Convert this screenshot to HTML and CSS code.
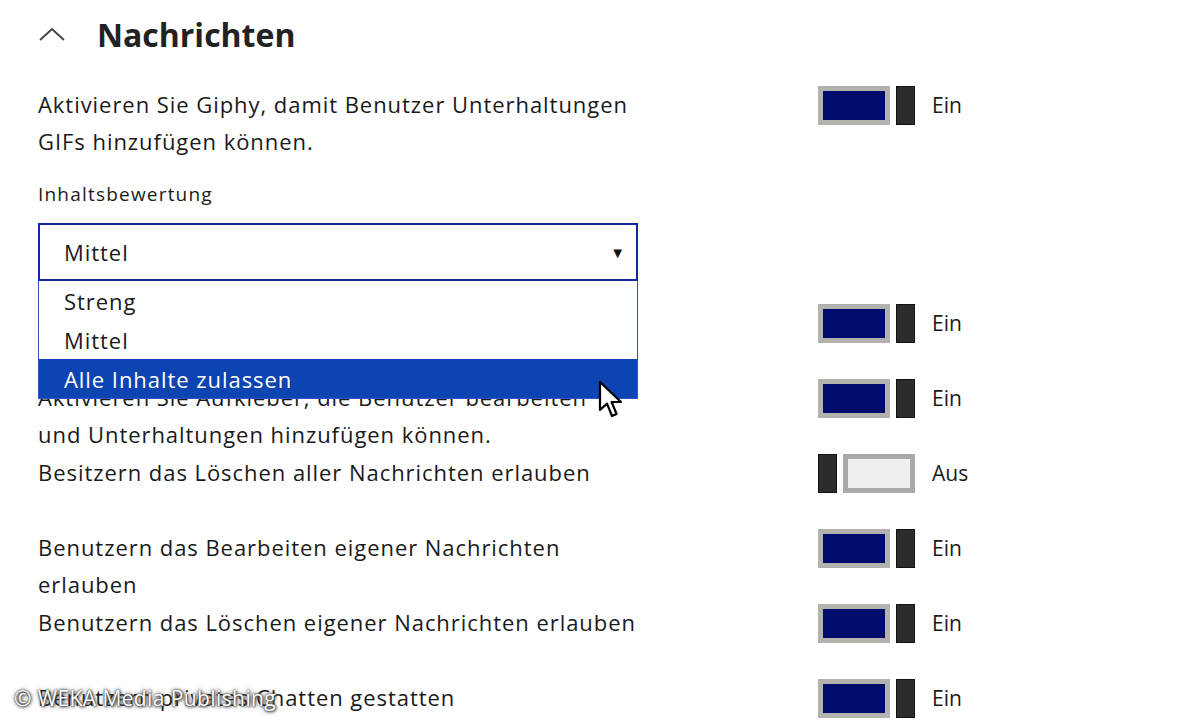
FILE: index.html
```html
<!DOCTYPE html>
<html lang="de">
<head>
  <meta charset="UTF-8">
  <meta name="viewport" content="width=device-width, initial-scale=1.0">
  <title>Nachrichten</title>
  <link rel="stylesheet" href="styles.css">
</head>
<body>

  <div class="page">
    <div class="section-head">
      <svg class="chevron" width="26" height="14" viewBox="0 0 26 14">
        <polyline points="1,13 13,2 25,13" fill="none" stroke="#444" stroke-width="2"/>
      </svg>
      <h2>Nachrichten</h2>
    </div>

    <div class="row">
      <p class="desc">Aktivieren Sie Giphy, damit Benutzer Unterhaltungen GIFs hinzufügen können.</p>
      <div class="toggle on"><span class="track"></span><span class="thumb"></span></div>
      <span class="state">Ein</span>
    </div>

    <div class="rating">
      <label class="rating-label">Inhaltsbewertung</label>
      <div class="select-wrap">
        <div class="select">
          <span>Mittel</span>
          <span class="arrow">&#9660;</span>
        </div>
        <ul class="options">
          <li>Streng</li>
          <li>Mittel</li>
          <li class="active">Alle Inhalte zulassen</li>
        </ul>
        <svg class="cursor" width="26" height="40" viewBox="0 0 13 20">
          <path d="M1 1 L1 15 L4.5 11.8 L7 18 L9.3 17 L6.8 11 L11.5 11 Z" fill="#fff" stroke="#000" stroke-width="1.1" stroke-linejoin="round"/>
        </svg>
      </div>
    </div>

    <div class="row">
      <p class="desc">Aktivieren Sie Memes, die Benutzer bearbeiten<br>und Unterhaltungen hinzufügen können.</p>
      <div class="toggle on"><span class="track"></span><span class="thumb"></span></div>
      <span class="state">Ein</span>
    </div>

    <div class="row">
      <p class="desc">Aktivieren Sie Aufkleber, die Benutzer bearbeiten<br>und Unterhaltungen hinzufügen können.</p>
      <div class="toggle on"><span class="track"></span><span class="thumb"></span></div>
      <span class="state">Ein</span>
    </div>

    <div class="row">
      <p class="desc">Besitzern das Löschen aller Nachrichten erlauben</p>
      <div class="toggle off"><span class="thumb"></span><span class="track"></span></div>
      <span class="state">Aus</span>
    </div>

    <div class="row">
      <p class="desc">Benutzern das Bearbeiten eigener Nachrichten erlauben</p>
      <div class="toggle on"><span class="track"></span><span class="thumb"></span></div>
      <span class="state">Ein</span>
    </div>

    <div class="row">
      <p class="desc">Benutzern das Löschen eigener Nachrichten erlauben</p>
      <div class="toggle on"><span class="track"></span><span class="thumb"></span></div>
      <span class="state">Ein</span>
    </div>

    <div class="row">
      <p class="desc">Benutzern privates Chatten gestatten</p>
      <div class="toggle on"><span class="track"></span><span class="thumb"></span></div>
      <span class="state">Ein</span>
    </div>
  </div>

  <div class="watermark">© WEKA Media Publishing</div>

</body>
</html>
```

FILE: styles.css
```css
body {
  font-family: 'Open Sans', 'Noto Sans', sans-serif;
  background-color: #fff;
  color: #1a1a1a;
  margin: 0;
  height: 720px;
  overflow: hidden;
  position: relative;
}

.page {
  padding-left: 38px;
}

.section-head {
  display: flex;
  align-items: center;
  height: 68px;
  margin-bottom: 18px;
}

.chevron {
  margin-left: 1px;
  margin-right: 32px;
}

h2 {
  margin: 0;
  font-size: 32px;
  font-weight: 700;
  color: #222;
}

.row {
  display: flex;
  align-items: flex-start;
  min-height: 75px;
}

.desc {
  width: 608px;
  margin: 0 -8px 0 0;
  font-size: 22px;
  letter-spacing: 0.95px;
  line-height: 37px;
}

.toggle {
  display: flex;
  gap: 6px;
  margin-left: 180px;
  height: 39px;
}

.track {
  width: 72px;
  height: 39px;
  box-sizing: border-box;
  border: 5px solid #b4b2ae;
  background-color: #000c6c;
}

.toggle.off .track {
  border-color: #a9a9a9;
  background-color: #efefef;
}

.thumb {
  width: 19px;
  height: 39px;
  box-sizing: border-box;
  border: 1px solid #111;
  background-color: #2c2c2c;
}

.state {
  margin-left: 17px;
  font-size: 21px;
  line-height: 39px;
}

.rating {
  margin-top: 20px;
  width: 600px;
}

.rating-label {
  display: block;
  font-size: 19px;
  letter-spacing: 1.2px;
  line-height: 26px;
  margin-bottom: 16px;
}

.select-wrap {
  position: relative;
  margin-bottom: 23px;
}

.select {
  display: flex;
  align-items: center;
  justify-content: space-between;
  height: 58px;
  box-sizing: border-box;
  border: 2px solid #1329a0;
  padding: 0 10px 0 24px;
  font-size: 22px;
  letter-spacing: 0.95px;
}

.arrow {
  font-size: 15px;
  color: #111;
}

.options {
  position: absolute;
  top: 100%;
  left: 0;
  width: 600px;
  box-sizing: border-box;
  margin: 0;
  padding: 0;
  list-style: none;
  background-color: #fff;
  border: 1px solid #3352c4;
  border-top: none;
  z-index: 2;
}

.options li {
  height: 39px;
  line-height: 41px;
  padding-left: 25px;
  font-size: 22px;
  letter-spacing: 0.95px;
}

.options li.active {
  background-color: #0c44b2;
  color: #fff;
}

.cursor {
  position: absolute;
  left: 560px;
  top: 157px;
  z-index: 3;
}

.watermark {
  position: absolute;
  left: 14px;
  bottom: 8px;
  font-size: 21px;
  letter-spacing: 0.4px;
  color: #fff;
  text-shadow: 0 0 2px #222, 0 0 4px #555, 1px 1px 3px #444;
  z-index: 4;
}
```
